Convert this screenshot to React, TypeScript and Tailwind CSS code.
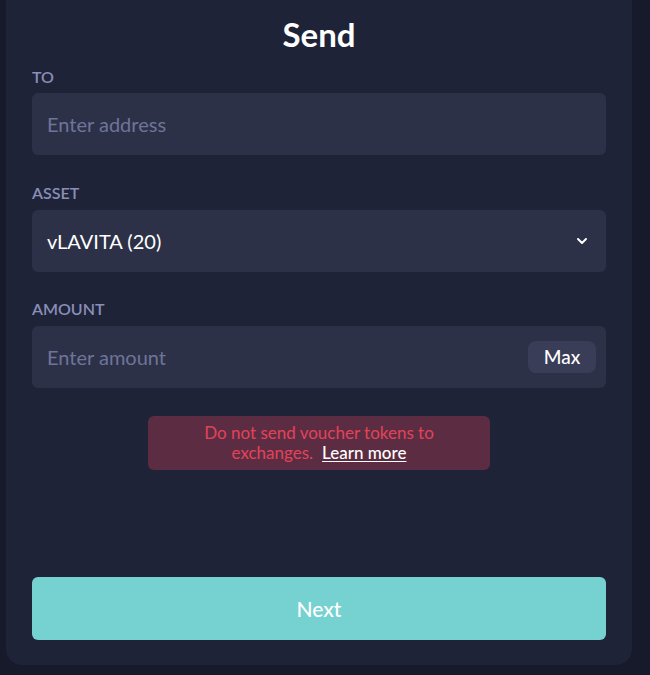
import React from "react";

function Chevron() {
  return (
    <svg width="16" height="16" viewBox="0 0 24 24" fill="none" stroke="currentColor" strokeWidth="3" strokeLinecap="round" strokeLinejoin="round">
      <path d="M6 9l6 6 6-6" />
    </svg>
  );
}

export default function App() {
  return (
    <div className="min-h-[675px] w-[650px] bg-[#171a2b] pl-[6px] pb-[10px] pr-[18px] text-white" style={{ fontFamily: "Lato, 'Noto Sans', sans-serif" }}>
      <div className="flex h-[665px] flex-col rounded-b-2xl bg-[#1f2338] px-[26px] pb-[25px]">
        <h1 className="pt-[14px] text-center text-[33px] font-bold leading-[40px]">Send</h1>
        <div className="mt-[13px] flex flex-col">
          <label className="text-[16px] font-semibold leading-[20px] text-[#8a8fb8]">TO</label>
          <div className="mt-[6px] flex h-[62px] items-center rounded-md bg-[#2d3148] px-[15px] text-[20px] text-[#6f7499]">Enter address</div>
        </div>
        <div className="mt-[28px] flex flex-col">
          <label className="text-[16px] font-semibold leading-[20px] text-[#8a8fb8]">ASSET</label>
          <div className="mt-[7px] flex h-[62px] items-center justify-between rounded-md bg-[#2d3148] pl-[15px] pr-[16px] text-[20px] text-white">
            <span>vLAVITA (20)</span>
            <Chevron />
          </div>
        </div>
        <div className="mt-[27px] flex flex-col">
          <label className="text-[16px] font-semibold leading-[20px] text-[#8a8fb8]">AMOUNT</label>
          <div className="mt-[7px] flex h-[62px] items-center justify-between rounded-md bg-[#2d3148] pl-[15px] pr-[10px] text-[20px]">
            <span className="text-[#6f7499]">Enter amount</span>
            <span className="flex h-[32px] w-[68px] items-center justify-center rounded-lg bg-[#393d57] text-[19px] font-medium text-white">Max</span>
          </div>
        </div>
        <div className="mt-[28px] flex justify-center">
          <div className="flex w-[342px] flex-col items-center rounded-md bg-[#5c2d42] py-[7px] text-[17px] leading-[20px] text-[#e2435a]">
            <span>Do not send voucher tokens to</span>
            <div className="flex gap-[9px]">
              <span>exchanges.</span>
              <a className="font-medium text-white underline underline-offset-2">Learn more</a>
            </div>
          </div>
        </div>
        <div className="flex-1" />
        <button className="h-[63px] w-full rounded-md bg-[#76d1d1] text-[21px] font-medium text-white">Next</button>
      </div>
    </div>
  );
}
